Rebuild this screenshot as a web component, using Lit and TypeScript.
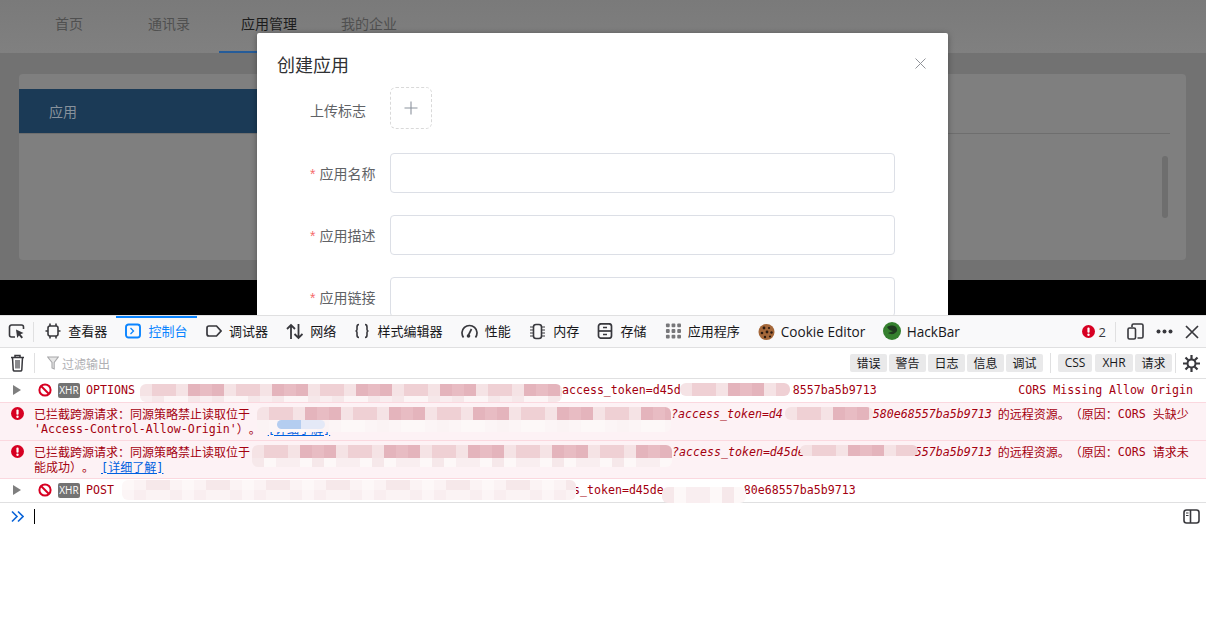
import { LitElement, html, css, svg } from "lit";
import { customElement } from "lit/decorators.js";

const ink = "#38383d";
const icons: Record<string, any> = {
  pick: svg`<svg class="i17" viewBox="0 0 17 17" fill="none" stroke="${ink}" stroke-width="1.6"><path d="M7 14H3.5A2 2 0 0 1 1.500 12V4A2 2 0 0 1 3.500 2H13.500A2 2 0 0 1 15.500 4V6"/><path d="M8 6.500l7.500 3.500-3 1.200 2.500 3-1.500 1.300-2.500-3-1.800 2.500z" fill="${ink}" stroke="none"/></svg>`,
  inspect: svg`<svg class="i16" viewBox="0 0 16 16" fill="none" stroke="${ink}" stroke-width="1.6"><rect x="3" y="3" width="10" height="10" rx="2"/><path d="M5 0.500v2.500M11 0.500v2.500M5 13v2.500M11 13v2.500M0.500 8H3M13 8h2.500"/></svg>`,
  console: svg`<svg class="i16" viewBox="0 0 16 16" fill="none" stroke="#0a84ff" stroke-width="1.900"><rect x="1" y="1.500" width="14" height="13" rx="2.500"/><path d="M5.500 5l3 3-3 3" stroke-width="1.300"/></svg>`,
  debug: svg`<svg class="i16" viewBox="0 0 16 16" fill="none" stroke="${ink}" stroke-width="1.700"><path d="M3 3h7.500l4.500 5-4.500 5H3A2 2 0 0 1 1 11V5A2 2 0 0 1 3 3z"/></svg>`,
  network: svg`<svg class="i17" viewBox="0 0 17 17" fill="none" stroke="${ink}" stroke-width="1.800"><path d="M5 16V2M1 6l4-4 4 4M12.500 1v14M8.500 11l4 4 4-4"/></svg>`,
  style: svg`<svg class="i16" viewBox="0 0 16 16" fill="none" stroke="${ink}" stroke-width="1.600"><path d="M5 1.500C3 1.500 3 2.500 3 4v2.500C3 7.500 2.500 8 1.500 8 2.500 8 3 8.500 3 9.500V12c0 1.500 0 2.500 2 2.500M11 1.500c2 0 2 1 2 2.500v2.500c0 1 .5 1.500 1.500 1.500-1 0-1.500.5-1.500 1.500V12c0 1.500 0 2.500-2 2.500"/></svg>`,
  perf: svg`<svg class="i17" viewBox="0 0 17 17" fill="none" stroke="${ink}" stroke-width="1.700"><path d="M2.500 14.500A7.500 7.500 0 1 1 14.500 14.500"/><path d="M7 13L10.500 6"/><circle cx="7.500" cy="13" r="1.800" fill="${ink}" stroke="none"/></svg>`,
  memory: svg`<svg class="i17" viewBox="0 0 17 17" fill="none" stroke="${ink}" stroke-width="1.300"><rect x="4.500" y="1.500" width="8" height="14" rx="2.500" stroke-width="1.600"/><path d="M1 4h3M1 7h3M1 10h3M1 13h3M13 4h3M13 7h3M13 10h3M13 13h3" stroke-width="1"/></svg>`,
  storage: svg`<svg class="i16" viewBox="0 0 16 16" fill="none" stroke="${ink}" stroke-width="1.700"><rect x="1.500" y="0.800" width="13" height="14.400" rx="2.500"/><path d="M1.500 8h13"/><path d="M6 4.500h4M6 11.500h4" stroke-width="1.300"/></svg>`,
  cookie: svg`<svg class="i17" viewBox="0 0 17 17"><circle cx="8.500" cy="9" r="8" fill="#a5683a"/><circle cx="6" cy="5" r="1.400" fill="#2c1a10"/><circle cx="11" cy="5" r="1.100" fill="#2c1a10"/><circle cx="4" cy="10" r="1.300" fill="#2c1a10"/><circle cx="9" cy="9" r="1.400" fill="#2c1a10"/><circle cx="13.500" cy="9.500" r="1.200" fill="#2c1a10"/><circle cx="7" cy="14" r="1.200" fill="#2c1a10"/><circle cx="12" cy="13.500" r="1.100" fill="#2c1a10"/></svg>`,
  hack: svg`<svg class="i18" viewBox="0 0 18 18"><circle cx="9" cy="9" r="9" fill="#35802f"/><path d="M4 5c3-2 7-2 9 0 2 3 1 5-1 6-2 2-5 1-7 0 2-1 4-1 5-2-2 0-4-1-6-4z" fill="#1f3a1f"/></svg>`,
  error: svg`<svg class="i13" viewBox="0 0 13 13"><circle cx="6.500" cy="6.500" r="6.500" fill="#d70022"/><rect x="5.400" y="2.500" width="2.200" height="5.200" rx="1" fill="#fff"/><circle cx="6.500" cy="9.700" r="1.200" fill="#fff"/></svg>`,
  dock: svg`<svg class="i17" viewBox="0 0 17 17" fill="none" stroke="${ink}" stroke-width="1.600"><path d="M5 4V2.500A1.500 1.500 0 0 1 6.500 1H14.500A1.500 1.500 0 0 1 16 2.500V13.500A1.500 1.500 0 0 1 14.500 15H10.500"/><rect x="1" y="5" width="7.500" height="11" rx="1.500"/></svg>`,
  dots: svg`<svg class="i17" viewBox="0 0 17 17" fill="${ink}"><circle cx="2.500" cy="8.500" r="2"/><circle cx="8.500" cy="8.500" r="2"/><circle cx="14.500" cy="8.500" r="2"/></svg>`,
  close: svg`<svg class="i14" viewBox="0 0 14 14" fill="none" stroke="${ink}" stroke-width="1.700"><path d="M1 1l12 12M13 1L1 13"/></svg>`,
  trash: svg`<svg class="i15t" viewBox="0 0 15 18" fill="none" stroke="${ink}" stroke-width="1.500"><path d="M1 3.500h13M5 3.500V1.500h5v2"/><path d="M2.500 3.500l.7 12.500a1.300 1.300 0 0 0 1.300 1h6a1.300 1.300 0 0 0 1.300-1l.7-12.500"/><rect x="5" y="6" width="5" height="8.500" fill="#8a8a8d" stroke="none"/></svg>`,
  filter: svg`<svg class="i12" viewBox="0 0 12 14" fill="none" stroke="#a8a8aa" stroke-width="1.100"><path d="M.7 1h10.600L7.200 6.500V13L5 12V6.500z" fill="#e6e6e6"/></svg>`,
  gear: svg`<svg class="i17" viewBox="0 0 17 17" fill="none" stroke="${ink}"><circle cx="8.500" cy="8.500" r="4" stroke-width="2"/><path d="M8.500 0v4M8.500 13v4M0 8.500h4M13 8.500h4M2.500 2.500l2.800 2.800M11.700 11.700l2.800 2.800M14.500 2.500l-2.800 2.800M5.300 11.700l-2.800 2.800" stroke-width="2.200"/></svg>`,
  block: svg`<svg class="i14" viewBox="0 0 14 14" fill="none" stroke="#d70022" stroke-width="2"><circle cx="7" cy="7" r="5.600"/><path d="M3 3l8 8"/></svg>`,
  chevrons: svg`<svg class="i13" viewBox="0 0 13 13" fill="none" stroke="#0a64d8" stroke-width="1.600"><path d="M1 1.500l5 5-5 5M7 1.500l5 5-5 5"/></svg>`,
  side: svg`<svg class="i17" viewBox="0 0 17 15" fill="none" stroke="${ink}" stroke-width="1.600"><rect x="1" y="1" width="15" height="13" rx="2.500"/><path d="M7.500 1v13"/><path d="M3 4h2.500M3 6.500h2.500" stroke-width="1.200"/></svg>`,
  plus: svg`<svg class="i14" viewBox="0 0 14 14" fill="none" stroke="#8c939d" stroke-width="1.100"><path d="M7 .5v13M.5 7h13"/></svg>`,
  x: svg`<svg class="i11" viewBox="0 0 11 11" fill="none" stroke="#909399" stroke-width="1"><path d="M.5.500l10 10M10.500.500l-10 10"/></svg>`,
};
const appsDots = [0, 1, 2].flatMap((r) => [0, 1, 2].map((c) => [c * 6 + 0.5, r * 6 + 0.5]));
icons.apps = svg`<svg class="i16" viewBox="0 0 16 17" fill="#77777a">${appsDots.map(([x, y]) => svg`<rect x=${x} y=${y} width="4" height="4" rx="1"/>`)}</svg>`;

const tabs = [
  ["inspect", "查看器"], ["console", "控制台"], ["debug", "调试器"], ["network", "网络"], ["style", "样式编辑器"],
  ["perf", "性能"], ["memory", "内存"], ["storage", "存储"], ["apps", "应用程序"], ["cookie", "Cookie Editor"], ["hack", "HackBar"],
];

const strong = ["#f5e3e5", "#efd0d4", "#e8bcc3", "#f0d3d8", "#ecc6cc", "#e4b4bc", "#f2dadd"];
const pale = ["#fbf3f4", "#f9eef0", "#fdf8f8", "#fcf5f6", "#f6e8ea"];
const blue = ["#b4cdf0", "#cfdcf3", "#e4e9f7", "#b1cdf1"];
// x, y, width, bands of [tone, height]
const mosaics: [number, number, number, [string, number][]][] = [
  [140, 384, 422, [["s", 12], ["p", 6]]],
  [680, 383, 110, [["s", 13]]],
  [257, 407, 414, [["s", 13], ["p", 12]]],
  [785, 407, 88, [["s", 13]]],
  [252, 445, 420, [["s", 13], ["p", 9]]],
  [800, 445, 118, [["s", 11]]],
  [122, 480, 454, [["p", 10], ["p", 10]]],
  [662, 487, 84, [["p", 16]]],
  [277, 420, 48, [["b", 9]]],
];

const blocked = "已拦截跨源请求\uFF1A同源策略禁止读取位于";
const remote = "的远程资源\u3002\uFF08原因\uFF1A";

type Seg = { t?: string; gap?: number; it?: boolean; link?: boolean; c?: boolean };

@customElement("app-root")
export class AppRoot extends LitElement {
  static styles = css`
    :host { display: block; width: 1206px; height: 621px; position: relative; overflow: hidden; background: #fff;
      font-family: "Noto Sans CJK SC", sans-serif; }
    svg { display: block; flex: none; }
    .i11 { width: 11px; height: 11px; } .i12 { width: 12px; height: 14px; } .i13 { width: 13px; height: 13px; }
    .i14 { width: 14px; height: 14px; } .i15t { width: 15px; height: 18px; } .i16 { width: 16px; height: 16px; }
    .i17 { width: 17px; height: 17px; } .i18 { width: 18px; height: 18px; }

    .page { height: 315px; background: #000; position: relative; overflow: hidden; }
    .bg { height: 280px; background: #727272; }
    .nav { height: 53px; background: linear-gradient(#7a7a7a, #808080); display: flex; font-size: 14px; color: #505050; line-height: 47px; }
    .n1 { margin-left: 55px; margin-right: 65px; } .n2 { margin-right: 29px; }
    .nav .n3 { padding: 0 22px; color: #1c1c1c; border-bottom: 2px solid #265c99; height: 51px; }
    .n4 { margin-left: 22px; }
    .card { margin: 21px 20px 0 19px; height: 186px; background: #7f7f7f; border-radius: 4px; display: flex; flex-direction: column; position: relative; overflow: hidden; }
    .cardhead { margin-top: 15px; height: 45px; flex: none; display: flex; border-bottom: 1px solid #6e6e6e; margin-right: 16px; box-sizing: border-box; }
    .apphead { width: 240px; background: #1b3a56; color: #88929c; font-size: 14px; line-height: 44px; padding-left: 30px; box-sizing: border-box; height: 44px; }
    .scroll { position: absolute; left: 1143px; top: 82px; width: 6px; height: 62px; border-radius: 3px; background: #6e6e6e; }

    .dialog { position: absolute; left: 257px; top: 33px; width: 691px; height: 300px; background: #fff; border-radius: 2px;
      box-shadow: 0 1px 6px rgba(0,0,0,.35); padding: 18px 0 0 0; box-sizing: border-box; }
    .title { font-size: 18px; line-height: 26px; color: #303133; margin-left: 20px; height: 36px; }
    .closex { position: absolute; right: 22px; top: 25px; }
    .frow { display: flex; margin-bottom: 22px; height: 40px; }
    .frow.up { height: 44px; }
    .flabel { width: 133px; padding-left: 53px; box-sizing: border-box; font-size: 14px; line-height: 40px; color: #606266; flex: none; white-space: nowrap; }
    .up .flabel { line-height: 47px; }
    .star { color: #f56c6c; margin-right: 4px; font-family: "Liberation Sans", sans-serif; }
    .upload { width: 42px; height: 42px; border: 1px dashed #d9d9d9; border-radius: 6px; box-sizing: border-box; display: flex; align-items: center; justify-content: center; }
    .input { width: 505px; height: 40px; border: 1px solid #dcdfe6; border-radius: 4px; box-sizing: border-box; background: #fff; }

    .toolbar { height: 33px; box-sizing: border-box; background: #f9f9fa; border-top: 1px solid #e0e0e1; border-bottom: 1px solid #e0e0e1; display: flex; align-items: center; font-size: 13px; color: #18181a; }
    .pick { width: 33px; display: flex; justify-content: center; flex: none; }
    .sep { width: 1px; height: 20px; background: #e0e0e1; flex: none; }
    .sep.s1 { margin-right: 2px; }
    .tab { display: flex; align-items: center; gap: 7.300px; height: 31px; padding: 0 9px; white-space: nowrap; box-sizing: border-box; margin-top: -1px; }
    .tab span { padding-bottom: 2px; }
    .tab.on { color: #0a84ff; box-shadow: inset 0 2px 0 #0a84ff; }
    .tab.latin { font-family: "Open Sans", sans-serif; font-size: 13.600px; gap: 6px; padding-right: 8.300px; }
    .tab.latin span { padding-bottom: 0; }
    .right { margin-left: auto; display: flex; align-items: center; height: 100%; }
    .errcount { display: flex; align-items: center; gap: 4px; margin-right: 9px; font-size: 13px; color: #38383d; font-family: "Open Sans", sans-serif; }
    .ticons { display: flex; align-items: center; gap: 12px; margin: 0 7px 0 11px; }

    .filterbar { height: 31px; box-sizing: border-box; border-bottom: 1px solid #e0e0e1; display: flex; align-items: center; background: #fff; }
    .trash { width: 34px; display: flex; justify-content: center; flex: none; }
    .ph { display: flex; align-items: center; gap: 3px; margin-left: 12px; font-size: 12px; color: #b0b0b4; }
    .btns { margin-left: auto; display: flex; align-items: center; gap: 2px; }
    .btn { height: 18px; width: 37px; text-align: center; background: #e9e9ea; border-radius: 2px; font-size: 12px; line-height: 18px; color: #18181a; }
    .btn.l { font-family: "Open Sans", sans-serif; }
    .btn.css { width: 34px; }
    .btn.xhrb { width: 38px; margin-left: 1px; }
    .fsep { width: 1px; height: 20px; background: #e0e0e1; margin: 0 5px; }
    .fsep.end { margin: 0 0 0 1px; }
    .gear { margin: 0 6px 0 7px; }

    .log { font-family: "DejaVu Sans Mono", "Noto Sans CJK SC", monospace; font-size: 11.620px; color: #a4000f; text-spacing-trim: space-all; }
    .row { height: 24px; box-sizing: border-box; display: flex; align-items: center; white-space: pre; position: relative; border-bottom: 1px solid #fbd8df; padding-bottom: 1px; }
    .row.last { border-bottom: 1px solid #e0e0e1; }
    .arrow { width: 0; height: 0; border-left: 8px solid #7f7f7f; border-top: 5px solid transparent; border-bottom: 5px solid transparent; margin: 0 17px 0 13px; }
    .xhr { width: 22px; height: 15px; background: #737373; color: #fff; border-radius: 2px; font: 10px/15px "Open Sans", sans-serif; text-align: center; margin: 0 6px; }
    .cors { position: absolute; right: 13px; }
    .err { height: 38px; box-sizing: border-box; background: #fdf2f5; border-bottom: 1px solid #fbd8df; padding: 3px 0 0 34px; position: relative; }
    .err .ic { position: absolute; left: 11px; top: 4px; }
    .line { display: flex; height: 15px; align-items: center; white-space: pre; }
    .it { font-style: italic; }
    .cjk { font-family: "Noto Sans CJK SC", sans-serif; font-size: 12px; }
    .link { color: #0060df; text-decoration: underline; font-size: 12px; }
    .prompt { height: 26px; display: flex; align-items: center; padding: 0 6px 0 11px; }
    .caret { width: 1px; height: 15px; background: #000; margin-left: 10px; }
    .prompt .i17 { margin-left: auto; }

    .m { position: absolute; overflow: hidden; border-radius: 6px; }
    .band { display: flex; }
    .cell { width: 12px; flex: none; }
  `;

  private segs(list: Seg[]) {
    return list.map((s) =>
      s.gap
        ? html`<span style="width:${s.gap}px"></span>`
        : s.link
        ? html`<span class="link">${s.t}</span>`
        : s.it
        ? html`<span class="it">${s.t}</span>`
        : s.c
        ? html`<span class="cjk">${s.t}</span>`
        : html`<span>${s.t}</span>`
    );
  }

  private mosaic(m: (typeof mosaics)[number], idx: number) {
    const [x, y, w, bands] = m;
    const cols = Math.ceil(w / 12);
    return html`<div class="m" style="left:${x}px;top:${y}px;width:${w}px">
      ${bands.map(([b, h], r) => {
        const pal = b === "s" ? strong : b === "b" ? blue : pale;
        return html`<div class="band" style="height:${h}px">
          ${Array.from({ length: cols }, (_, c) => {
            const k = (c * c * 3 + c * 5 + r * 11 + idx * 7) % pal.length;
            return html`<div class="cell" style="background:${pal[k]}"></div>`;
          })}
        </div>`;
      })}
    </div>`;
  }

  render() {
    return html`
      <div class="page">
        <div class="bg">
          <div class="nav">
            <span class="n1">首页</span><span class="n2">通讯录</span><span class="n3">应用管理</span><span class="n4">我的企业</span>
          </div>
          <div class="card">
            <div class="cardhead"><div class="apphead">应用</div></div>
            <div class="scroll"></div>
          </div>
        </div>
        <div class="dialog">
          <div class="title">创建应用</div>
          <div class="closex">${icons.x}</div>
          <div class="frow up"><div class="flabel">上传标志</div><div class="upload">${icons.plus}</div></div>
          <div class="frow"><div class="flabel"><span class="star">*</span>应用名称</div><div class="input"></div></div>
          <div class="frow"><div class="flabel"><span class="star">*</span>应用描述</div><div class="input"></div></div>
          <div class="frow"><div class="flabel"><span class="star">*</span>应用链接</div><div class="input"></div></div>
        </div>
      </div>

      <div class="toolbar">
        <div class="pick">${icons.pick}</div>
        <div class="sep s1"></div>
        ${tabs.map(
          ([ic, label]) => html`<div class="tab ${label === "控制台" ? "on" : ""} ${/^[A-Z]/.test(label) ? "latin" : ""}">${icons[ic]}<span>${label}</span></div>`
        )}
        <div class="right">
          <div class="errcount">${icons.error}<span>2</span></div>
          <div class="sep"></div>
          <div class="ticons">${icons.dock}${icons.dots}${icons.close}</div>
        </div>
      </div>

      <div class="filterbar">
        <div class="trash">${icons.trash}</div>
        <div class="sep"></div>
        <div class="ph">${icons.filter}<span>过滤输出</span></div>
        <div class="btns">
          ${["错误", "警告", "日志", "信息", "调试"].map((b) => html`<div class="btn">${b}</div>`)}
          <div class="fsep"></div>
          <div class="btn l css">CSS</div><div class="btn l xhrb">XHR</div><div class="btn">请求</div>
          <div class="fsep end"></div>
        </div>
        <div class="gear">${icons.gear}</div>
      </div>

      <div class="log">
        <div class="row">
          <div class="arrow"></div>${icons.block}<div class="xhr">XHR</div>
          ${this.segs([{ t: "OPTIONS" }, { gap: 427 }, { t: "access_token=d45d" }, { gap: 112 }, { t: "8557ba5b9713" }])}
          <span class="cors">CORS Missing Allow Origin</span>
        </div>
        <div class="err">
          <div class="ic">${icons.error}</div>
          <div class="line">${this.segs([{ t: blocked, c: true }, { gap: 421 }, { t: "?access_token=d4", it: true }, { gap: 90 }, { t: "580e68557ba5b9713", it: true }, { gap: 6 }, { t: remote, c: true }, { t: "CORS " }, { t: "头缺少", c: true }])}</div>
          <div class="line">${this.segs([{ t: "'Access-Control-Allow-Origin'" }, { t: "\uFF09\u3002", c: true }, { gap: 7 }, { t: "[详细了解]", link: true }])}</div>
        </div>
        <div class="err">
          <div class="ic">${icons.error}</div>
          <div class="line">${this.segs([{ t: blocked, c: true }, { gap: 422 }, { t: "?access_token=d45de", it: true }, { gap: 110 }, { t: "557ba5b9713", it: true }, { gap: 6 }, { t: remote, c: true }, { t: "CORS " }, { t: "请求未", c: true }])}</div>
          <div class="line">${this.segs([{ t: "能成功\uFF09\u3002", c: true }, { gap: 7 }, { t: "[详细了解]", link: true }])}</div>
        </div>
        <div class="row last">
          <div class="arrow"></div>${icons.block}<div class="xhr">XHR</div>
          ${this.segs([{ t: "POST" }, { gap: 459 }, { t: "s_token=d45de" }, { gap: 80 }, { t: "80e68557ba5b9713" }])}
        </div>
      </div>
      <div class="prompt">${icons.chevrons}<div class="caret"></div>${icons.side}</div>
      ${mosaics.map((m, i) => this.mosaic(m, i))}
    `;
  }
}
